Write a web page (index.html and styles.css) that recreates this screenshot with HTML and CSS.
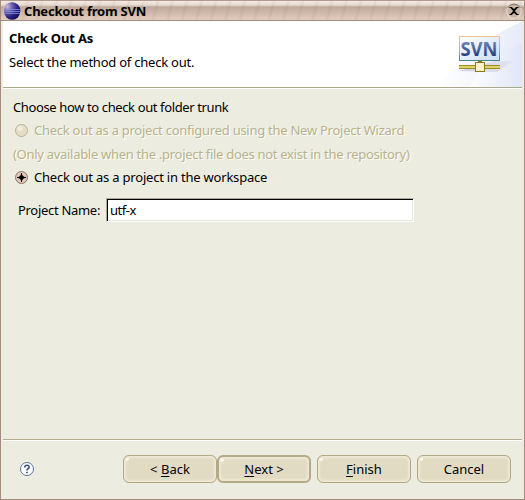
FILE: index.html
```html
<!DOCTYPE html>
<html lang="en">
<head>
<meta charset="utf-8">
<title>Checkout from SVN</title>
<link rel="stylesheet" href="styles.css">
</head>
<body>
<div class="window">
  <div class="titlebar">
    <svg class="app-icon" width="20" height="20" viewBox="0 0 20 20">
      <defs><radialGradient id="orb" cx=".2" cy=".25" r=".8"><stop offset="0" stop-color="#d3b9d8"/><stop offset=".35" stop-color="#7467b3"/><stop offset=".75" stop-color="#2a2388"/><stop offset="1" stop-color="#17105c"/></radialGradient></defs>
      <ellipse cx="9.500" cy="9" rx="8.700" ry="9" fill="#cfb9c8"/>
      <ellipse cx="10.200" cy="9" rx="8.200" ry="8.800" fill="url(#orb)"/>
      <path d="M3 7.500h15M2.500 9.500h16M3 11.500h15" stroke="#8292d8" stroke-width=".8"/>
    </svg>
    <h1 class="title">Checkout from SVN</h1>
    <svg class="close" width="18" height="18" viewBox="0 0 18 18">
      <circle cx="9" cy="9" r="7.300" fill="#c9b4a5" stroke="#eadfd7"/>
      <path d="M2.500 6a7.300 7.300 0 0 1 13 0" fill="none" stroke="#7e6a5c"/>
      <path d="M4.500 5.500h2l2.500 2.500 2.500-2.500h2M4.500 12.500h2l2.500-2.500 2.500 2.500h2M6 5.500l6 7M12 5.500l-6 7" fill="none" stroke="#000" stroke-width="1.200"/>
    </svg>
  </div>
  <div class="content">
    <header class="banner">
      <div class="banner-text">
        <h2 class="heading">Check Out As</h2>
        <p class="subtitle">Select the method of check out.</p>
      </div>
      <svg class="banner-art" width="100" height="66" viewBox="0 0 100 66">
        <defs>
          <linearGradient id="sky" x1="0" x2="1"><stop offset="0" stop-color="#fff"/><stop offset="1" stop-color="#dfe5f7"/></linearGradient>
          <linearGradient id="frame" x1="0" y1="0" x2="0" y2="1"><stop offset="0" stop-color="#eac58d"/><stop offset=".5" stop-color="#a8b8bd"/><stop offset="1" stop-color="#4e858b"/></linearGradient>
          <linearGradient id="screen" x1="0" y1="0" x2="1" y2="1"><stop offset="0" stop-color="#fff"/><stop offset="1" stop-color="#cbdcf3"/></linearGradient>
          <linearGradient id="ink" x1="0" y1="0" x2="0" y2="1"><stop offset=".2" stop-color="#7188b8"/><stop offset=".8" stop-color="#213a79"/></linearGradient>
          <linearGradient id="shade" x1="0" x2="1"><stop offset="0" stop-color="#c5bfd8"/><stop offset="1" stop-color="#e1e2f2"/></linearGradient>
        </defs>
        <path d="M15 66Q52 20 100 1V66Z" fill="url(#sky)" opacity=".75"/>
        <path d="M48 66Q64 30 100 22V66Z" fill="url(#sky)" opacity=".8"/>
        <path d="M37 50L73 40H92L75 51Z" fill="url(#shade)" opacity=".75"/>
        <rect x="37.500" y="15.500" width="40" height="24" fill="url(#screen)" stroke="url(#frame)"/>
        <text class="logo-text" x="38.500" y="35" textLength="37" lengthAdjust="spacingAndGlyphs" fill="url(#ink)">SVN</text>
        <path d="M37 46h41" stroke="#9c8d1d" stroke-width="4"/>
        <path d="M37 46h41" stroke="#f5e98c" stroke-width="1.500"/>
        <rect x="53.500" y="41.500" width="9" height="9" fill="#fff3cd" stroke="#8c7b13"/>
        <path d="M56 40.500h4" stroke="#8c7b13"/>
      </svg>
    </header>
    <main class="form">
      <p class="prompt">Choose how to check out folder trunk</p>
      <div class="option disabled">
        <svg class="radio" width="14" height="14" viewBox="0 0 14 14"><circle cx="7.500" cy="7.500" r="6" fill="#e5dec7" stroke="#b9b191"/><circle cx="6" cy="5.500" r="2.500" fill="#f3eedf"/></svg>
        <span class="opt-wizard">Check out as a project configured using the New Project Wizard</span>
      </div>
      <p class="note disabled">(Only available when the .project file does not exist in the repository)</p>
      <div class="option">
        <svg class="radio" width="14" height="14" viewBox="0 0 14 14"><circle cx="7.500" cy="7.500" r="6" fill="#dfc8b9" stroke="#8b7568"/><path d="M7.500 3.500L9 6 11.500 7.500 9 9 7.500 11.500 6 9 3.500 7.500 6 6Z"/><path d="M7.500 3v9M3 7.500h9" stroke="#000"/></svg>
        <span class="opt-workspace">Check out as a project in the workspace</span>
      </div>
      <div class="field"><label class="field-label" for="name">Project Name:</label><input id="name" class="input" type="text" value="utf-x"></div>
    </main>
    <footer class="actions">
      <svg class="help" width="16" height="16" viewBox="0 0 16 16"><circle cx="8" cy="8" r="6.500" fill="#fff" stroke="#5e6f9d"/><path d="M5.800 6.500V5.800Q6 4.300 8 4.300T10.200 6Q10.200 7 9 7.700 8 8.300 8 9.500M8 10.800v1.500" fill="none" stroke="#384d85" stroke-width="1.600"/></svg>
      <button class="button">&lt; <u>B</u>ack</button>
      <button class="button default"><u>N</u>ext &gt;</button>
      <button class="button finish"><u>F</u>inish</button>
      <button class="button cancel">Cancel</button>
    </footer>
  </div>
</div>
</body>
</html>
```
FILE: styles.css
```css
* { box-sizing: border-box; }
body { margin: 0; font: 13px/18px "Noto Sans", "Open Sans", sans-serif; color: #000; }
h1, h2, p { margin: 0; font-size: 13px; line-height: 18px; white-space: nowrap; }
.window { width: 525px; height: 500px; background: #ecede0; border: 1px solid #a48d7f; border-top: 0; display: flex; flex-direction: column; overflow: hidden; }
.titlebar { height: 21px; flex: none; display: flex; align-items: flex-start; padding-left: 1px; border-top: 1px solid #b19a8b; border-bottom: 1px solid #a78f7c; background: repeating-linear-gradient(105deg, transparent 0 9px, #70503c14 12px, transparent 14px), linear-gradient(#f6ebe5 0, #e6dad1 4px, #bfa99b 6px, #cbb4a4 10px, #dcc9b9 17px); }
.app-icon { margin-top: 1px; flex: none; }
.title { margin: 1px 0 0 2px; flex: 1; letter-spacing: -0.22px; }
.close { margin: 1px 1px 0 0; flex: none; }
.content { flex: 1; display: flex; flex-direction: column; padding: 0 2px; }
.banner { height: 67px; flex: none; display: flex; justify-content: space-between; overflow: hidden; background: #fff; border-bottom: 1px solid #aaa88a; }
.banner-text { padding: 8px 0 0 6px; }
.heading { letter-spacing: -0.15px; }
.subtitle { margin-top: 6px; letter-spacing: -0.23px; }
.logo-text { font: bold 19px "Noto Sans", sans-serif; }
.form { flex: 1; padding: 9px 0 0 10px; border-top: 1px solid #fff; }
.prompt { height: 20px; letter-spacing: -0.38px; }
.option { display: flex; align-items: center; height: 24px; padding-left: 1px; gap: 6px; white-space: nowrap; }
.opt-wizard { letter-spacing: -0.26px; }
.opt-workspace { letter-spacing: -0.21px; }
.note { height: 23px; line-height: 25px; letter-spacing: -0.29px; }
.disabled { color: #b8b18d; text-shadow: 1px 1px #fffef5; }
.field { margin: 9px 0 0 5px; display: flex; align-items: center; height: 24px; }
.field-label { width: 88px; white-space: nowrap; letter-spacing: -0.3px; }
.input { width: 308px; height: 24px; padding: 0 3px; border: 1px solid; border-color: #b1ad8e #fff #fff #b1ad8e; box-shadow: inset 1px 1px #000, inset -1px -1px #e6e6dc; background: #fff; font: inherit; letter-spacing: -0.45px; outline: 0; }
.actions { height: 60px; flex: none; display: flex; padding: 15px 10px 0 16px; border-top: 1px solid #b1ad8e; box-shadow: inset 0 1px #fff; }
.help { margin: 6px 88px 0 0; flex: none; }
.button { width: 94px; height: 28px; flex: none; padding: 0; border: 1px solid #b1a884; border-radius: 6px; background: radial-gradient(circle at 3px 3px, #fff 0 1.500px, transparent 2px), #e2dbc3; box-shadow: inset 0 0 2px 2px #eee8d5; font: inherit; color: #000; }
.default { border: 2px solid #b4aa8a; }
.finish { margin-left: 6px; }
.cancel { margin-left: 6px; }
u { text-underline-offset: 2px; }
```
